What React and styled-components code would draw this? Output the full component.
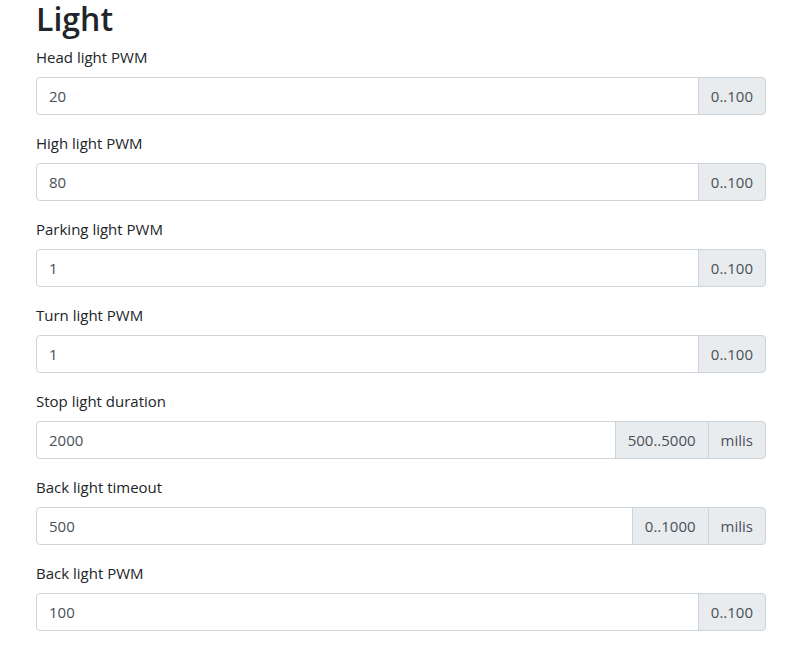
import React from "react";
import styled, { createGlobalStyle } from "styled-components";

const Global = createGlobalStyle`
  html, body { margin: 0; padding: 0; background: #fff; }
  body {
    font-family: "Open Sans", "Noto Sans", "Liberation Sans", sans-serif;
    font-size: 16px;
    line-height: 1.5;
    color: #212529;
  }
  * { box-sizing: border-box; }
`;

const Page = styled.div`
  padding: 0 32px 0 36px;
`;

const Title = styled.h2`
  margin: 0 0 7px;
  font-size: 32px;
  font-weight: 600;
  line-height: 38px;
  color: #212529;
`;

const Group = styled.div`
  margin-bottom: 16px;
`;

const Label = styled.label`
  display: block;
  margin-bottom: 8px;
  font-size: 15px;
  line-height: 24px;
`;

const InputGroup = styled.div`
  display: flex;
  align-items: stretch;
  width: 100%;
`;

const Input = styled.input`
  flex: 1 1 auto;
  min-width: 0;
  height: 38px;
  padding: 6px 12px;
  font: inherit;
  font-size: 15px;
  color: #495057;
  background: #fff;
  border: 1px solid #ced4da;
  border-radius: 4px 0 0 4px;
  outline: none;
`;

const Addon = styled.span`
  display: flex;
  align-items: center;
  padding: 6px 12px;
  font-size: 15px;
  color: #495057;
  background: #e9ecef;
  border: 1px solid #ced4da;
  margin-left: -1px;
  white-space: nowrap;
  border-radius: ${(p) => (p.$last ? "0 4px 4px 0" : "0")};
`;

const fields = [
  { label: "Head light PWM", value: "20", addons: ["0..100"] },
  { label: "High light PWM", value: "80", addons: ["0..100"] },
  { label: "Parking light PWM", value: "1", addons: ["0..100"] },
  { label: "Turn light PWM", value: "1", addons: ["0..100"] },
  { label: "Stop light duration", value: "2000", addons: ["500..5000", "milis"] },
  { label: "Back light timeout", value: "500", addons: ["0..1000", "milis"] },
  { label: "Back light PWM", value: "100", addons: ["0..100"] },
];

export default function App() {
  return (
    <>
      <Global />
      <Page>
        <Title>Light</Title>
        {fields.map((f) => (
          <Group key={f.label}>
            <Label>{f.label}</Label>
            <InputGroup>
              <Input defaultValue={f.value} />
              {f.addons.map((a, i) => (
                <Addon key={a} $last={i === f.addons.length - 1}>
                  {a}
                </Addon>
              ))}
            </InputGroup>
          </Group>
        ))}
      </Page>
    </>
  );
}
